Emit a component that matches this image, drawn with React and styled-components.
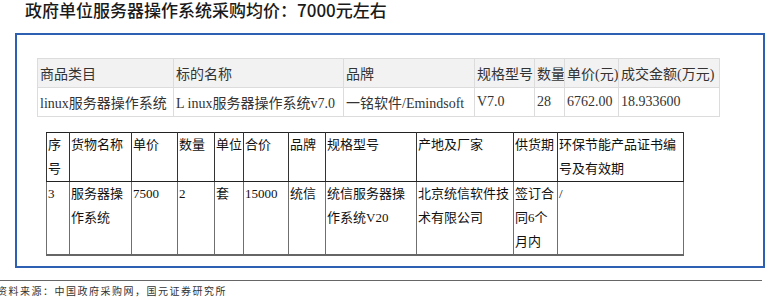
import React from "react";
import styled, { createGlobalStyle } from "styled-components";

const Global = createGlobalStyle`
  html, body { margin: 0; padding: 0; background: #fff; }
  body { font-family: "Liberation Serif", "Noto Sans CJK SC", serif; }
`;

const Page = styled.div`
  display: flex;
  flex-direction: column;
  width: 769px;
  height: 300px;
  overflow: hidden;
`;

const Title = styled.h1`
  margin: -2px 0 0;
  padding-left: 25px;
  font-family: "Noto Sans CJK SC", "Noto Sans", sans-serif;
  font-size: 17px;
  line-height: 24px;
  font-weight: 500;
  color: #1a1a1a;
  white-space: nowrap;
`;

const Frame = styled.div`
  margin: 11px 0 0 15px;
  width: 726px;
  border: 2px solid #2d5fb2;
  padding: 23px 0 10px 20px;
  display: flex;
  flex-direction: column;
  gap: 15px;
`;

const Table = styled.table`
  border-collapse: collapse;
  table-layout: fixed;
  width: ${(p) => p.$width}px;
  margin-left: ${(p) => p.$indent || 0}px;
  font-family: "Liberation Serif", "Noto Sans CJK SC", serif;
`;

const SummaryCell = styled.td`
  height: 28px;
  padding: 0 2px;
  border: 1px solid #dcdcdc;
  background: ${(p) => (p.$head ? "#f2f2f2" : "#fff")};
  font-size: 14px;
  color: #333;
  white-space: nowrap;
  overflow: hidden;
  vertical-align: middle;
`;

const DetailCell = styled.td`
  padding: 0 0 0 1px;
  font-size: 13px;
  line-height: 24px;
  color: #111;
  vertical-align: top;
  word-break: break-all;
  border-top: 1px solid #222;
  border-left: 1px solid ${(p) => (p.$head ? "#333" : "#6f6f6f")};
  border-right: 1px solid ${(p) => (p.$head ? "#333" : "#6f6f6f")};
  border-bottom: ${(p) => (p.$head ? "1px solid #222" : "2px solid #666")};
  height: ${(p) => p.$h}px;
`;

const Rule = styled.div`
  margin-top: 12px;
  width: 762px;
  height: 1px;
  background: #666;
`;

const Source = styled.div`
  margin: 3px 0 0 -3px;
  font-family: "Noto Sans CJK SC", sans-serif;
  font-size: 10px;
  line-height: 14px;
  letter-spacing: 1.5px;
  color: #333;
  white-space: nowrap;
`;

const summaryCols = [136, 170, 131, 60, 30, 54, 101];
const summaryHead = ["商品类目", "标的名称", "品牌", "规格型号", "数量", "单价(元)", "成交金额(万元)"];
const summaryRow = [
  "linux服务器操作系统",
  "L inux服务器操作系统v7.0",
  "一铭软件/Emindsoft",
  "V7.0",
  "28",
  "6762.00",
  "18.933600",
];

const detailCols = [23, 62, 46, 37, 29, 45, 37, 91, 97, 44, 126];
const detailHead = [
  "序号",
  "货物名称",
  "单价",
  "数量",
  "单位",
  "合价",
  "品牌",
  "规格型号",
  "产地及厂家",
  "供货期",
  "环保节能产品证书编号及有效期",
];
const detailRow = [
  "3",
  "服务器操作系统",
  "7500",
  "2",
  "套",
  "15000",
  "统信",
  "统信服务器操作系统V20",
  "北京统信软件技术有限公司",
  "签订合同6个月内",
  "/",
];

const sum = (a) => a.reduce((s, v) => s + v, 0);

export default function App() {
  return (
    <>
      <Global />
      <Page>
        <Title>政府单位服务器操作系统采购均价：7000元左右</Title>
        <Frame>
          <Table $width={sum(summaryCols)}>
            <colgroup>
              {summaryCols.map((w, i) => (
                <col key={i} style={{ width: w }} />
              ))}
            </colgroup>
            <tbody>
              <tr>
                {summaryHead.map((t, i) => (
                  <SummaryCell key={i} $head>
                    {t}
                  </SummaryCell>
                ))}
              </tr>
              <tr>
                {summaryRow.map((t, i) => (
                  <SummaryCell key={i}>{t}</SummaryCell>
                ))}
              </tr>
            </tbody>
          </Table>
          <Table $width={sum(detailCols)} $indent={9}>
            <colgroup>
              {detailCols.map((w, i) => (
                <col key={i} style={{ width: w }} />
              ))}
            </colgroup>
            <tbody>
              <tr>
                {detailHead.map((t, i) => (
                  <DetailCell key={i} $head $h={48}>
                    {t}
                  </DetailCell>
                ))}
              </tr>
              <tr>
                {detailRow.map((t, i) => (
                  <DetailCell key={i} $h={72}>
                    {t}
                  </DetailCell>
                ))}
              </tr>
            </tbody>
          </Table>
        </Frame>
        <Rule />
        <Source>资料来源：中国政府采购网，国元证券研究所</Source>
      </Page>
    </>
  );
}
